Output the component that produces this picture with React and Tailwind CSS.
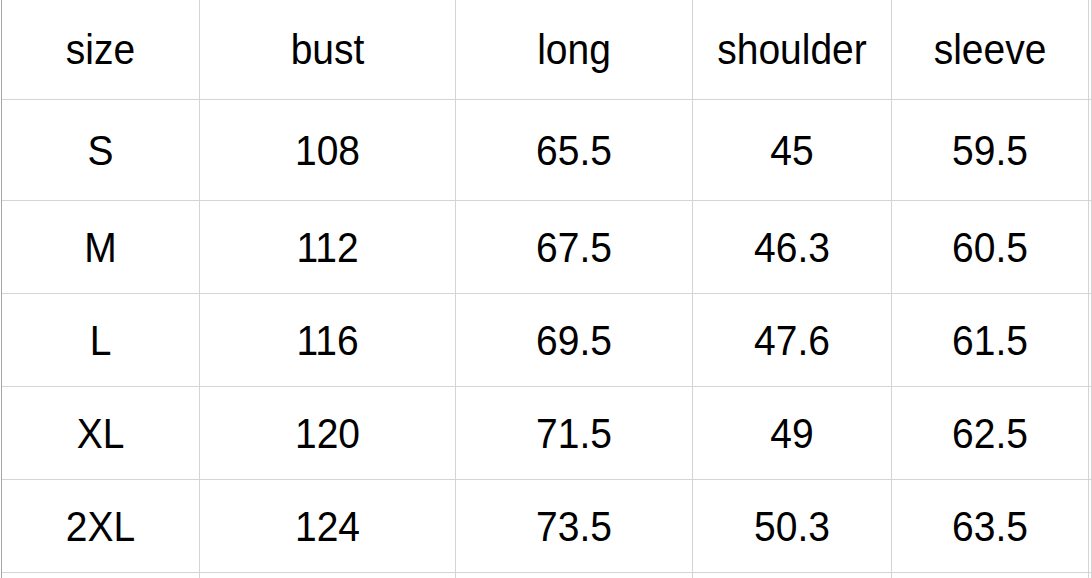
const rows = [
  ["size", "bust", "long", "shoulder", "sleeve"],
  ["S", "108", "65.5", "45", "59.5"],
  ["M", "112", "67.5", "46.3", "60.5"],
  ["L", "116", "69.5", "47.6", "61.5"],
  ["XL", "120", "71.5", "49", "62.5"],
  ["2XL", "124", "73.5", "50.3", "63.5"],
  ["", "", "", "", ""],
];

export default function App() {
  return (
    <div className="h-[578px] w-[1092px] overflow-hidden bg-white pl-px" style={{ fontFamily: "'Liberation Sans', Arial, sans-serif" }}>
      <div className="grid grid-cols-[198px_256px_237px_199px_197px_1fr] grid-rows-[100px_101px_93px_93px_93px_93px_93px] border-l border-[#a6a6a6]">
        {rows.map((r, i) =>
          [...r, ""].map((cell, j) => (
            <div key={`${i}-${j}`} className="flex items-center justify-center border-r border-b border-[#d4d4d4] text-[39px] text-black">
              <span className="scale-y-[1.08] leading-none">{cell}</span>
            </div>
          ))
        )}
      </div>
    </div>
  );
}
